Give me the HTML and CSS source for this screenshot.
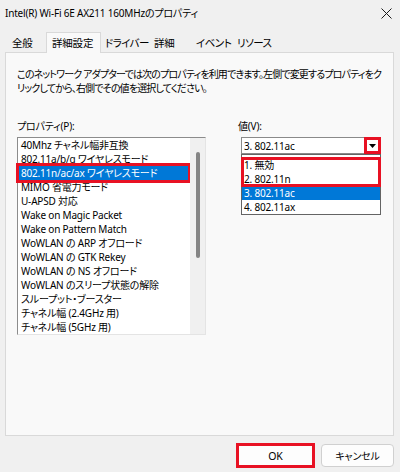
FILE: index.html
```html
<!DOCTYPE html>
<html lang="ja">
<head>
<meta charset="utf-8">
<title>プロパティ</title>
<link rel="stylesheet" href="styles.css">
</head>
<body>
<div class="titlebar">
  <span class="title">Intel(R) Wi-Fi 6E AX211 160MHzのプロパティ</span>
  <svg class="close" width="11" height="11" viewBox="0 0 11 11"><path d="M0.5 0.5L10.5 10.5M10.5 0.5L0.5 10.5" stroke="#1a1a1a" stroke-width="1"/></svg>
</div>
<div class="tabs">
  <div class="tab w1">全般</div>
  <div class="tab w2 active">詳細設定</div>
  <div class="tab w3">ドライバー</div>
  <div class="tab w4">詳細</div>
  <div class="tab w5">イベント</div>
  <div class="tab w6">リソース</div>
</div>
<div class="panel">
  <p class="desc"><span>このネットワーク アダプターでは次のプロパティを利用できます。左側で変更するプロパティをク</span><span>リックしてから、右側でその値を選択してください。</span></p>
  <div class="cols">
    <div class="col-left">
      <div class="label">プロパティ(P):</div>
      <div class="listbox">
        <div class="items">
          <div class="item">40Mhz チャネル幅非互換</div>
          <div class="item">802.11a/b/g ワイヤレスモード</div>
          <div class="item selected">802.11n/ac/ax ワイヤレスモード</div>
          <div class="item">MIMO 省電力モード</div>
          <div class="item">U-APSD 対応</div>
          <div class="item">Wake on Magic Packet</div>
          <div class="item">Wake on Pattern Match</div>
          <div class="item">WoWLAN の ARP オフロード</div>
          <div class="item">WoWLAN の GTK Rekey</div>
          <div class="item">WoWLAN の NS オフロード</div>
          <div class="item">WoWLAN のスリープ状態の解除</div>
          <div class="item">スループット・ブースター</div>
          <div class="item">チャネル幅 (2.4GHz 用)</div>
          <div class="item">チャネル幅 (5GHz 用)</div>
        </div>
        <div class="scroll"><div class="thumb"></div></div>
      </div>
    </div>
    <div class="col-right">
      <div class="label">値(V):</div>
      <div class="combo">
        <span class="combo-text">3. 802.11ac</span>
        <span class="arrow"><svg width="7" height="4" viewBox="0 0 7 4"><path d="M0 0H7L3.5 4Z" fill="#000"/></svg></span>
      </div>
      <div class="dropdown">
        <div class="group">
          <div class="opt">1. 無効</div>
          <div class="opt">2. 802.11n</div>
        </div>
        <div class="opt selected">3. 802.11ac</div>
        <div class="opt">4. 802.11ax</div>
      </div>
    </div>
  </div>
</div>
<div class="buttons">
  <div class="btn ok">OK</div>
  <div class="btn cancel">キャンセル</div>
</div>
</body>
</html>
```
FILE: styles.css
```css
* { box-sizing: border-box; }
html, body { margin: 0; padding: 0; }
body {
  width: 400px;
  height: 472px;
  overflow: hidden;
  background: #f0f0f0;
  font-family: "Noto Sans", "Noto Sans CJK JP", sans-serif;
  font-size: 10px;
  color: #000;
  font-feature-settings: "palt";
  letter-spacing: -0.2px;
}
.titlebar {
  height: 32px;
  display: flex;
  justify-content: space-between;
  align-items: flex-start;
  padding: 6px 8px 0 5px;
}
.title { font-size: 10px; line-height: 14px; }
.close { margin-top: 2px; }
.tabs {
  height: 20px;
  display: flex;
  align-items: flex-end;
  padding-left: 4px;
}
.tab {
  height: 18px;
  line-height: 17px;
  font-size: 10.5px;
  white-space: nowrap;
  border: 1px solid transparent;
  border-bottom: none;
}
.tab.active {
  height: 21px;
  margin-bottom: -1px;
  padding-top: 2px;
  background: #f9f9f9;
  border-color: #d9d9d9;
  position: relative;
  z-index: 1;
}
.w1 { width: 42px; padding-left: 7px; }
.w2 { width: 55px; padding-left: 5px; }
.w3 { width: 45px; padding-left: 3px; letter-spacing: -0.6px; }
.w4 { width: 43px; padding-left: 7px; }
.w5 { width: 43px; padding-left: 6px; letter-spacing: -0.5px; }
.w6 { width: 40px; padding-left: 4px; letter-spacing: -0.5px; }
.panel {
  margin: 0 6px 0 5px;
  height: 384px;
  border: 1px solid #d9d9d9;
  background: #f9f9f9;
  padding: 14px 11px 0;
}
.desc { margin: 0; line-height: 14px; letter-spacing: -0.85px; }
.desc span { display: block; white-space: nowrap; }
.cols { display: flex; gap: 32px; margin-top: 24px; }
.col-left { width: 189px; }
.col-right { width: 144px; }
.label { height: 14px; line-height: 14px; margin-bottom: 4px; white-space: nowrap; }
.listbox {
  display: flex;
  height: 198px;
  border: 1px solid;
  border-color: #8c8c8c #e4e4e4 #e4e4e4 #8c8c8c;
  background: #fff;
}
.items { flex: 1; }
.item { height: 14px; line-height: 14px; padding-left: 3px; white-space: nowrap; }
.item.selected {
  background: #0078d7;
  color: #fff;
  margin: 0 2px 0 1px;
  padding-left: 2px;
  outline: 3px solid #e81123;
}
.scroll { width: 15px; background: #f0f0f0; padding-top: 14px; }
.thumb { width: 4px; height: 106px; margin: 0 auto; background: #858585; border-radius: 2px; }
.combo {
  display: flex;
  align-items: center;
  margin-left: 3px;
  width: 140px;
  height: 17px;
  border: 1px solid #8a8a8a;
  background: #fff;
}
.combo-text { flex: 1; padding-left: 2px; line-height: 14px; }
.arrow {
  width: 17px;
  height: 17px;
  margin: -1px;
  border: 3px solid #e81123;
  display: flex;
  align-items: center;
  justify-content: center;
}
.arrow svg { display: block; }
.dropdown {
  margin-left: 3px;
  width: 140px;
  border: 1px solid #646464;
  background: #fff;
  padding-top: 3px;
}
.group { outline: 3px solid #e81123; outline-offset: -2px; }
.opt { height: 14px; line-height: 14px; padding-left: 2px; white-space: nowrap; }
.opt.selected { background: #0078d7; color: #fff; }
.buttons {
  display: flex;
  justify-content: flex-end;
  align-items: center;
  gap: 6px;
  padding-right: 6px;
  margin-top: 7px;
}
.btn {
  display: flex;
  align-items: center;
  justify-content: center;
  background: #fdfdfd;
}
.ok { width: 79px; height: 25px; border: 3px solid #e81123; font-size: 10.5px; }
.cancel { width: 73px; height: 23px; border: 1px solid #d0d0d0; border-radius: 4px; }
```
